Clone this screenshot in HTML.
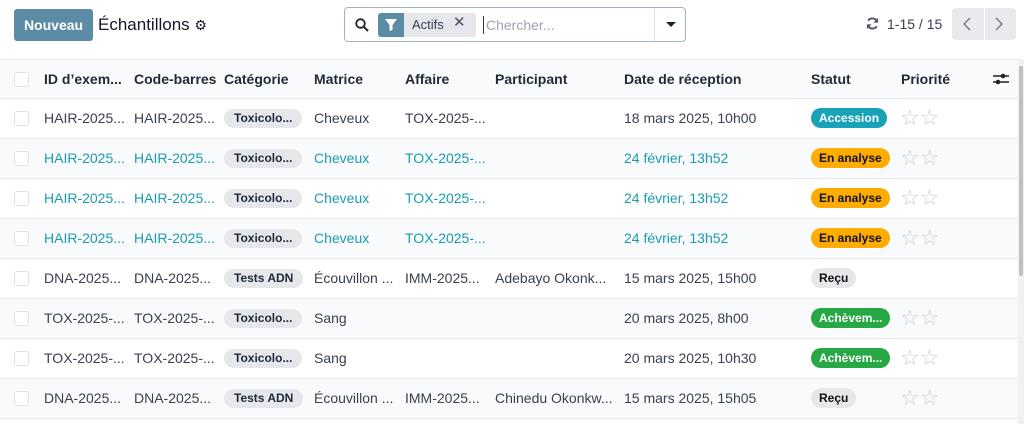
<!DOCTYPE html>
<html><head><meta charset="utf-8"><style>
*{box-sizing:border-box;margin:0;padding:0}
body{width:1024px;height:424px;overflow:hidden;background:#fff;font-family:"Liberation Sans",sans-serif;font-size:14px;color:#374151;position:relative}
.abs{position:absolute}
.btn{left:14px;top:9px;width:79px;height:32px;background:#5b8ba5;color:#fff;border-radius:3px;font-weight:bold;font-size:14px;line-height:32px;text-align:center}
.title{left:98px;top:15px;font-size:17px;color:#111827}
.search{left:344px;top:7px;width:342px;height:35px;border:1px solid #9fb3c0;border-radius:4px}
.row{position:absolute;left:0;width:1018px;height:40px;border-bottom:1px solid #e5e7eb}
.c{position:absolute;top:0;line-height:39px;white-space:nowrap}
.cb{position:absolute;left:14px;top:12px;width:15px;height:15px;border:1px solid #dfe2e6;border-radius:3px;background:#fff}
.pill{position:absolute;top:10px;height:19px;line-height:19px;border-radius:10px;background:#e5e7eb;font-size:12px;font-weight:bold;color:#1f2937;padding:0 10px}
.st{position:absolute;left:811px;top:9px;height:20px;line-height:20px;border-radius:10px;font-size:12px;font-weight:bold;padding:0 8px}
.stars{position:absolute;left:900px;top:8px;color:#c9cdd2;font-size:22px;letter-spacing:0px;line-height:22px}
.teal{color:#1a9cb0}
.h{font-weight:bold;color:#1f2937}
</style></head><body>
<div class="abs btn">Nouveau</div>
<div class="abs title">Échantillons <span style="font-size:14px">⚙</span></div>
<div class="abs search">
  <svg class="abs" style="left:10px;top:10px" width="14" height="14" viewBox="0 0 14 14"><circle cx="5.5" cy="5.5" r="4.3" fill="none" stroke="#222" stroke-width="1.8"/><path d="M8.6 8.6L13 13" stroke="#222" stroke-width="2"/></svg>
  <div class="abs" style="left:33px;top:5px;width:98px;height:24px;background:#e5e7eb;border-radius:3px"></div>
  <div class="abs" style="left:33px;top:5px;width:26px;height:24px;background:#5b8ba5;border-radius:3px 0 0 3px"></div>
  <svg class="abs" style="left:40px;top:11px" width="12" height="12" viewBox="0 0 12 12"><path d="M0 0H12L7.5 6V11L4.5 12V6Z" fill="#fff"/></svg>
  <div class="abs" style="left:67px;top:9px;font-size:13px;color:#374151">Actifs</div>
  <div class="abs" style="left:108px;top:5px;font-size:15px;color:#4b5563">✕</div>
  <div class="abs" style="left:138px;top:8px;width:1px;height:18px;background:#333"></div>
  <div class="abs" style="left:141px;top:9px;font-size:14px;color:#9ca3af">Chercher...</div>
  <div class="abs" style="left:309px;top:0;width:1px;height:33px;background:#dee2e6"></div>
  <div class="abs" style="left:321px;top:14px;width:0;height:0;border-left:5px solid transparent;border-right:5px solid transparent;border-top:5px solid #222"></div>
</div>
<svg class="abs" style="left:866px;top:17px" width="13" height="13" viewBox="0 0 14 14"><path d="M12 5A5.5 5.5 0 0 0 2.3 4M2 9A5.5 5.5 0 0 0 11.7 10" fill="none" stroke="#4b5563" stroke-width="2"/><path d="M13 1V6H8ZM1 13V8H6Z" fill="#4b5563"/></svg>
<div class="abs" style="left:887px;top:16px;font-size:14px;color:#374151">1-15 / 15</div>
<div class="abs" style="left:952px;top:8px;width:64px;height:32px;background:#e9eaed;border-radius:4px"></div>
<div class="abs" style="left:984px;top:8px;width:1px;height:32px;background:#fff"></div>
<svg class="abs" style="left:962px;top:17px" width="10" height="14"><path d="M8 1L2 7L8 13" fill="none" stroke="#777" stroke-width="1.4"/></svg>
<svg class="abs" style="left:994px;top:17px" width="10" height="14"><path d="M2 1L8 7L2 13" fill="none" stroke="#777" stroke-width="1.4"/></svg>
<div class="abs" style="left:1018px;top:59px;width:6px;height:365px;background:#f1f1f1"></div>
<div class="abs" style="left:1019px;top:66px;width:4px;height:210px;background:#c1c1c1;border-radius:2px"></div>

<div class="row" style="top:59px;background:#f9fafb;border-top:1px solid #e5e7eb">
  <div class="cb"></div>
  <div class="c h" style="left:44px">ID d’exem...</div>
  <div class="c h" style="left:134px">Code-barres</div>
  <div class="c h" style="left:224px">Catégorie</div>
  <div class="c h" style="left:314px">Matrice</div>
  <div class="c h" style="left:405px">Affaire</div>
  <div class="c h" style="left:495px">Participant</div>
  <div class="c h" style="left:624px">Date de réception</div>
  <div class="c h" style="left:811px">Statut</div>
  <div class="c h" style="left:901px">Priorité</div>
  <svg class="abs" style="left:993px;top:12px" width="16" height="14"><path d="M0 4H16M0 10H16" stroke="#222" stroke-width="1.6"/><circle cx="10" cy="4" r="2.3" fill="#222"/><circle cx="5" cy="10" r="2.3" fill="#222"/></svg>
</div>

<div class="row" style="top:99px"><div class="cb"></div><div class="c" style="left:44px">HAIR-2025...</div><div class="c" style="left:134px">HAIR-2025...</div><div class="pill" style="left:224px">Toxicolo...</div><div class="c" style="left:314px">Cheveux</div><div class="c" style="left:405px">TOX-2025-...</div><div class="c" style="left:624px">18 mars 2025, 10h00</div><div class="st" style="background:#17a2b8;color:#fff">Accession</div><div class="stars">☆☆</div></div>
<div class="row teal" style="top:139px;background:#f9fafb"><div class="cb"></div><div class="c" style="left:44px">HAIR-2025...</div><div class="c" style="left:134px">HAIR-2025...</div><div class="pill" style="left:224px">Toxicolo...</div><div class="c" style="left:314px">Cheveux</div><div class="c" style="left:405px">TOX-2025-...</div><div class="c" style="left:624px">24 février, 13h52</div><div class="st" style="background:#ffac00;color:#111">En analyse</div><div class="stars">☆☆</div></div>
<div class="row teal" style="top:179px"><div class="cb"></div><div class="c" style="left:44px">HAIR-2025...</div><div class="c" style="left:134px">HAIR-2025...</div><div class="pill" style="left:224px">Toxicolo...</div><div class="c" style="left:314px">Cheveux</div><div class="c" style="left:405px">TOX-2025-...</div><div class="c" style="left:624px">24 février, 13h52</div><div class="st" style="background:#ffac00;color:#111">En analyse</div><div class="stars">☆☆</div></div>
<div class="row teal" style="top:219px;background:#f9fafb"><div class="cb"></div><div class="c" style="left:44px">HAIR-2025...</div><div class="c" style="left:134px">HAIR-2025...</div><div class="pill" style="left:224px">Toxicolo...</div><div class="c" style="left:314px">Cheveux</div><div class="c" style="left:405px">TOX-2025-...</div><div class="c" style="left:624px">24 février, 13h52</div><div class="st" style="background:#ffac00;color:#111">En analyse</div><div class="stars">☆☆</div></div>
<div class="row" style="top:259px"><div class="cb"></div><div class="c" style="left:44px">DNA-2025...</div><div class="c" style="left:134px">DNA-2025...</div><div class="pill" style="left:224px">Tests ADN</div><div class="c" style="left:314px">Écouvillon ...</div><div class="c" style="left:405px">IMM-2025...</div><div class="c" style="left:495px">Adebayo Okonk...</div><div class="c" style="left:624px">15 mars 2025, 15h00</div><div class="st" style="background:#e5e7eb;color:#111">Reçu</div></div>
<div class="row" style="top:299px;background:#f9fafb"><div class="cb"></div><div class="c" style="left:44px">TOX-2025-...</div><div class="c" style="left:134px">TOX-2025-...</div><div class="pill" style="left:224px">Toxicolo...</div><div class="c" style="left:314px">Sang</div><div class="c" style="left:624px">20 mars 2025, 8h00</div><div class="st" style="background:#28a745;color:#fff">Achèvem...</div><div class="stars">☆☆</div></div>
<div class="row" style="top:339px"><div class="cb"></div><div class="c" style="left:44px">TOX-2025-...</div><div class="c" style="left:134px">TOX-2025-...</div><div class="pill" style="left:224px">Toxicolo...</div><div class="c" style="left:314px">Sang</div><div class="c" style="left:624px">20 mars 2025, 10h30</div><div class="st" style="background:#28a745;color:#fff">Achèvem...</div><div class="stars">☆☆</div></div>
<div class="row" style="top:379px;background:#f9fafb"><div class="cb"></div><div class="c" style="left:44px">DNA-2025...</div><div class="c" style="left:134px">DNA-2025...</div><div class="pill" style="left:224px">Tests ADN</div><div class="c" style="left:314px">Écouvillon ...</div><div class="c" style="left:405px">IMM-2025...</div><div class="c" style="left:495px">Chinedu Okonkw...</div><div class="c" style="left:624px">15 mars 2025, 15h05</div><div class="st" style="background:#e5e7eb;color:#111">Reçu</div><div class="stars">☆☆</div></div>
</body></html>
